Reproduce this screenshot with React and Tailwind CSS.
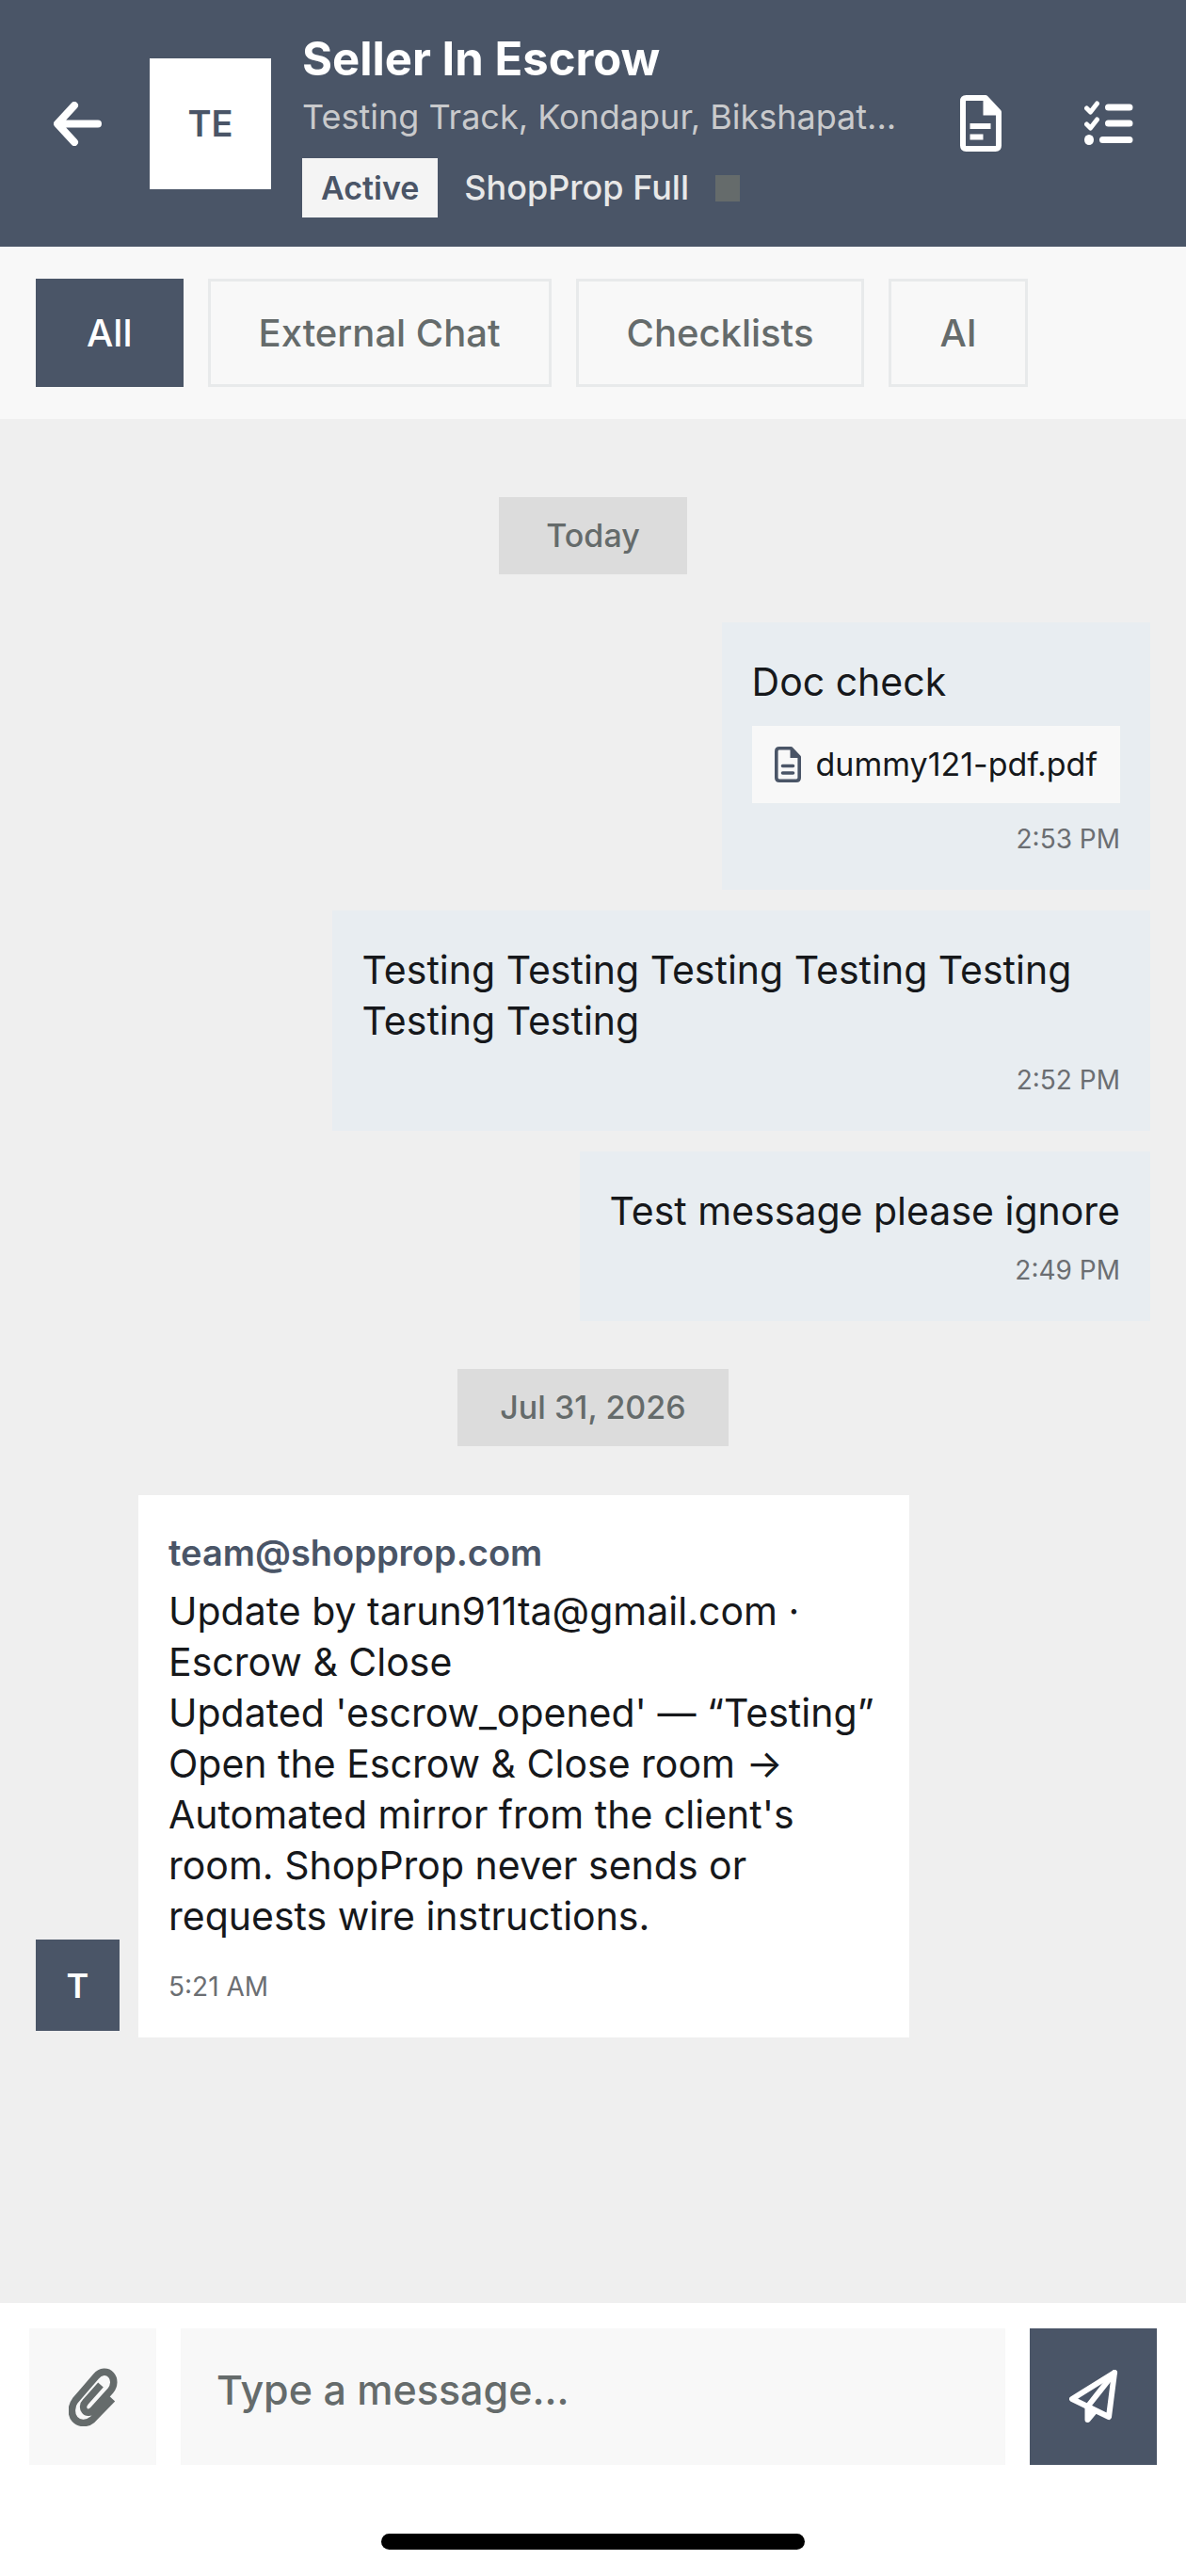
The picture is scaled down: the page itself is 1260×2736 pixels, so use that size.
import React, { useState } from 'react'

const FILTERS = ['All', 'External Chat', 'Checklists', 'AI']

const SENT = [
  { text: 'Doc check', file: 'dummy121-pdf.pdf', time: '2:53 PM' },
  { text: 'Testing Testing Testing Testing Testing Testing Testing', time: '2:52 PM' },
  { text: 'Test message please ignore', time: '2:49 PM' },
]

const UPDATE_LINES = [
  'Update by tarun911ta@gmail.com · Escrow & Close',
  "Updated 'escrow_opened' — “Testing”",
  'Open the Escrow & Close room →',
  "Automated mirror from the client's room. ShopProp never sends or requests wire instructions.",
]

function BackIcon() {
  return (
    <svg viewBox="0 0 51 47" width="51" height="47" fill="none" stroke="currentColor" strokeWidth="8" strokeLinecap="round" strokeLinejoin="round">
      <path d="M22 4 4 23.5 22 43M5 23.5h42" />
    </svg>
  )
}

function DocIcon() {
  return (
    <svg viewBox="0 0 44 60" width="44" height="60" fill="none">
      <path d="M27 3H6.500Q3 3 3 6.500V53.500Q3 57 6.500 57H37.500Q41 57 41 53.500V18Z" stroke="currentColor" strokeWidth="6" strokeLinejoin="round" />
      <path d="M24.500 4V21.500H42Z" fill="currentColor" />
      <path d="M10.500 33h22M10.500 44.500h14" stroke="currentColor" strokeWidth="6" />
    </svg>
  )
}

function ChecklistIcon() {
  return (
    <svg viewBox="0 0 52 48" width="52" height="48" fill="none" stroke="currentColor" strokeLinecap="round">
      <path d="M25.500 7H48M25.500 24H48M19.500 41.500H48" strokeWidth="7" />
      <path d="M2.500 8 6.500 12 13.500 3M2.500 25 6.500 29 13.500 20" strokeWidth="5" strokeLinejoin="round" />
      <ellipse cx="5" cy="41.500" rx="5" ry="5.500" fill="currentColor" stroke="none" />
    </svg>
  )
}

function FileIcon() {
  return (
    <svg viewBox="0 0 28 38" width="28" height="38" fill="none">
      <path d="M17.500 1.800H5Q1.800 1.800 1.800 5V33Q1.800 36.200 5 36.200H23Q26.200 36.200 26.200 33V11Z" stroke="currentColor" strokeWidth="3.600" strokeLinejoin="round" />
      <path d="M16.500 2.500V12H26Z" fill="currentColor" />
      <path d="M8.500 20.500h11M8.500 28h11" stroke="currentColor" strokeWidth="3.600" strokeLinecap="round" />
    </svg>
  )
}

function ClipIcon() {
  return (
    <svg viewBox="0 0 52 62" width="52" height="62" fill="none" stroke="currentColor" strokeWidth="7.500">
      <path d="M46.500 33 25 55C19 60 11 59.500 6.500 54.500S2.500 40 7 34.500L29 9C34 3 41 3 45 7.500S48.500 19 44.500 24L26 44.500C23 48 19 48 17 45.500S15 39 18 36L34 18" />
    </svg>
  )
}

function SendIcon() {
  return (
    <svg viewBox="0 0 52 57" width="52" height="57" fill="none" stroke="currentColor" strokeWidth="6" strokeLinecap="round" strokeLinejoin="round">
      <path d="M48 3 3 31l39 19Z" />
      <path d="M48 3 19.500 39" />
      <path d="M19.500 39V53L27 44Z" fill="currentColor" />
    </svg>
  )
}

function DateChip({ children }) {
  return (
    <div className="min-w-[200px] self-center bg-[#dcdcdc] px-[45px] py-4 text-center text-[34px] leading-[50px] font-medium text-[#656b6b]">
      {children}
    </div>
  )
}

function SentBubble({ text, file, time }) {
  return (
    <div className="flex max-w-[69vw] flex-col self-end bg-[#e8edf1] px-8 pt-9 pb-[34px]">
      <p className="text-[41px] leading-[54px] text-[#16181b]">{text}</p>
      {file && (
        <a href="#file" className="mt-5 mb-0.5 flex h-[82px] items-center gap-4 bg-[#f8f8f8] px-6 text-[34px] leading-[50px] text-[#16181b]">
          <span className="text-[#4a5567]"><FileIcon /></span>
          {file}
        </a>
      )}
      <time className="mt-4 self-end text-[28px] leading-[40px] text-[#6b6e72]">{time}</time>
    </div>
  )
}

export default function App() {
  const [filter, setFilter] = useState('All')
  const [draft, setDraft] = useState('')

  return (
    <div className="flex min-h-screen flex-col bg-[#efefef] font-['Inter',sans-serif]">
      {/* Header */}
      <header className="flex items-center bg-[#4a5567] px-[38px] py-[31px] text-white">
        <button aria-label="Back" className="flex h-24 w-[88px] shrink-0 items-center justify-center"><BackIcon /></button>
        <div className="ml-[33px] flex h-[139px] w-[129px] shrink-0 items-center justify-center bg-white text-[38px] font-semibold text-[#4a5567]">TE</div>
        <div className="mx-[33px] min-w-0 flex-1">
          <h1 className="truncate text-[49px] leading-[64px] font-bold">Seller In Escrow</h1>
          <p className="truncate text-4xl leading-[58px] text-[#c9cacc]">Testing Track, Kondapur, Bikshapat...</p>
          <div className="mt-[15px] flex items-center gap-7">
            <span className="bg-[#f4f4f4] px-5 text-[34px] leading-[63px] font-semibold text-[#4a5567]">Active</span>
            <span className="text-4xl leading-[63px] font-medium text-[#e8e8e8]">ShopProp Full</span>
            <span className="h-7 w-[26px] bg-[#656b6b]" />
          </div>
        </div>
        <button aria-label="Documents" className="flex h-24 w-[88px] shrink-0 items-center justify-center"><DocIcon /></button>
        <button aria-label="Checklists" className="ml-12 flex h-24 w-[88px] shrink-0 items-center justify-center"><ChecklistIcon /></button>
      </header>

      {/* Filters */}
      <nav className="flex gap-[26px] bg-[#f8f8f8] px-[38px] py-[34px]">
        {FILTERS.map((f) => (
          <button
            key={f}
            onClick={() => setFilter(f)}
            className={`h-[115px] border-3 px-[51px] text-[40px] font-medium ${
              filter === f ? 'border-[#4a5567] bg-[#4a5567] text-white' : 'border-[#e8eaeb] text-[#656b6b]'
            }`}
          >{f}</button>
        ))}
      </nav>

      {/* Messages */}
      <main className="flex flex-1 flex-col px-[38px] pt-[83px] pb-[83px]">
        <DateChip>Today</DateChip>
        <div className="my-[51px] flex flex-col gap-[22px]">
          {SENT.map((m) => <SentBubble key={m.time} {...m} />)}
        </div>
        <DateChip>Jul 31, 2026</DateChip>

        <div className="mt-[52px] flex items-end gap-5">
          <div className="mb-[7px] flex h-[97px] w-[89px] shrink-0 items-center justify-center bg-[#4a5567] text-4xl font-semibold text-white">T</div>
          <div className="w-[65vw] bg-white px-8 pt-9 pb-[34px]">
            <h2 className="text-[38px] leading-[50px] font-semibold text-[#4a5567]">team@shopprop.com</h2>
            <div className="mt-2.5 text-[41px] leading-[54px] text-[#16181b]">
              {UPDATE_LINES.map((l) => <p key={l}>{l}</p>)}
            </div>
            <time className="mt-7 block text-[28px] leading-[40px] text-[#6b6e72]">5:21 AM</time>
          </div>
        </div>
      </main>

      {/* Composer */}
      <footer className="bg-white px-[31px] pt-[27px] pb-7">
        <form className="flex h-[145px] gap-[26px]" onSubmit={(e) => e.preventDefault()}>
          <button type="button" aria-label="Attach file" className="flex w-[135px] shrink-0 items-center justify-center bg-[#f8f8f8] text-[#656b6b]"><ClipIcon /></button>
          <input
            aria-label="Message"
            value={draft}
            onChange={(e) => setDraft(e.target.value)}
            placeholder="Type a message..."
            className="min-w-0 flex-1 bg-[#f8f8f8] px-[38px] pb-3.5 text-[43px] font-medium outline-none placeholder:text-[#656b6b]"
          />
          <button aria-label="Send" className="flex w-[135px] shrink-0 items-center justify-center bg-[#4a5567] text-white"><SendIcon /></button>
        </form>
        <div className="mx-auto mt-[73px] h-[17px] w-[450px] rounded-full bg-black" />
      </footer>
    </div>
  )
}
